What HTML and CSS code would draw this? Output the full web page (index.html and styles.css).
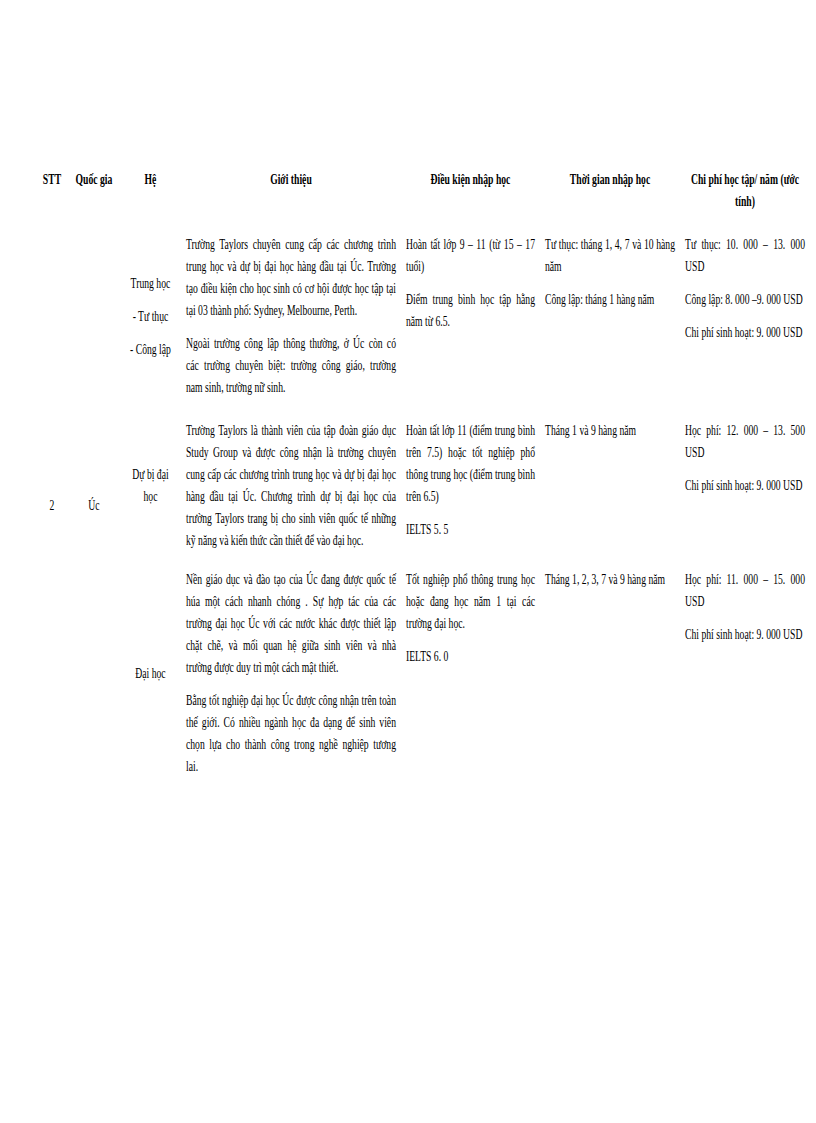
FILE: index.html
```html
<!DOCTYPE html>
<html lang="vi">
<head>
<meta charset="utf-8">
<title>Du học Úc</title>
<link rel="stylesheet" href="styles.css">
</head>
<body>
<div class="page">
<div class="sheet">
<table class="grid">
<colgroup>
<col class="c1"><col class="c2"><col class="c3"><col class="c4"><col class="c5"><col class="c6"><col class="c7">
</colgroup>
<thead>
<tr>
<th><p>STT</p></th>
<th><p>Quốc gia</p></th>
<th><p>Hệ</p></th>
<th><p>Giới thiệu</p></th>
<th><p>Điều kiện nhập học</p></th>
<th><p>Thời gian nhập học</p></th>
<th><p>Chi phí học tập/ năm (ước tính)</p></th>
</tr>
</thead>
<tbody>
<tr>
<td class="mid" rowspan="3"><p>2</p></td>
<td class="mid" rowspan="3"><p>Úc</p></td>
<td class="mid"><p>Trung học</p><p>- Tư thục</p><p>- Công lập</p></td>
<td>
<p><span class="l">Trường Taylors chuyên cung cấp các chương trình</span><span class="l">trung học và dự bị đại học hàng đầu tại Úc. Trường</span><span class="l">tạo điều kiện cho học sinh có cơ hội được học tập tại</span><span class="e">tại 03 thành phố: Sydney, Melbourne, Perth.</span></p>
<p><span class="l">Ngoài trường công lập thông thường, ở Úc còn có</span><span class="l">các trường chuyên biệt: trường công giáo, trường</span><span class="e">nam sinh, trường nữ sinh.</span></p>
</td>
<td>
<p><span class="l">Hoàn tất lớp 9 – 11 (từ 15 – 17</span><span class="e">tuổi)</span></p>
<p><span class="l">Điểm trung bình học tập hằng</span><span class="e">năm từ 6.5.</span></p>
</td>
<td>
<p><span class="l">Tư thục: tháng 1, 4, 7 và 10 hàng</span><span class="e">năm</span></p>
<p><span class="e">Công lập: tháng 1 hàng năm</span></p>
</td>
<td>
<p><span class="l">Tư thục: 10. 000 – 13. 000</span><span class="e">USD</span></p>
<p><span class="e">Công lập: 8. 000 –9. 000 USD</span></p>
<p><span class="e">Chi phí sinh hoạt: 9. 000 USD</span></p>
</td>
</tr>
<tr class="tight">
<td class="mid"><p>Dự bị đại<br>học</p></td>
<td>
<p><span class="l">Trường Taylors là thành viên của tập đoàn giáo dục</span><span class="l">Study Group và được công nhận là trường chuyên</span><span class="l">cung cấp các chương trình trung học và dự bị đại học</span><span class="l">hàng đầu tại Úc. Chương trình dự bị đại học của</span><span class="l">trường Taylors trang bị cho sinh viên quốc tế những</span><span class="e">kỹ năng và kiến thức cần thiết để vào đại học.</span></p>
</td>
<td>
<p><span class="l">Hoàn tất lớp 11 (điểm trung bình</span><span class="l">trên 7.5) hoặc tốt nghiệp phổ</span><span class="l">thông trung học (điểm trung bình</span><span class="e">trên 6.5)</span></p>
<p><span class="e">IELTS 5. 5</span></p>
</td>
<td>
<p><span class="e">Tháng 1 và 9 hàng năm</span></p>
</td>
<td>
<p><span class="l">Học phí: 12. 000 – 13. 500</span><span class="e">USD</span></p>
<p><span class="e">Chi phí sinh hoạt: 9. 000 USD</span></p>
</td>
</tr>
<tr>
<td class="mid"><p>Đại học</p></td>
<td>
<p><span class="l">Nền giáo dục và đào tạo của Úc đang được quốc tế</span><span class="l">húa một cách nhanh chóng . Sự hợp tác của các</span><span class="l">trường đại học Úc với các nước khác được thiết lập</span><span class="l">chặt chẽ, và mối quan hệ giữa sinh viên và nhà</span><span class="e">trường được duy trì một cách mật thiết.</span></p>
<p><span class="l">Bằng tốt nghiệp đại học Úc được công nhận trên toàn</span><span class="l">thế giới. Có nhiều ngành học đa dạng để sinh viên</span><span class="l">chọn lựa cho thành công trong nghề nghiệp tương</span><span class="e">lai.</span></p>
</td>
<td>
<p><span class="l">Tốt nghiệp phổ thông trung học</span><span class="l">hoặc đang học năm 1 tại các</span><span class="e">trường đại học.</span></p>
<p><span class="e">IELTS 6. 0</span></p>
</td>
<td>
<p><span class="e">Tháng 1, 2, 3, 7 và 9 hàng năm</span></p>
</td>
<td>
<p><span class="l">Học phí: 11. 000 – 15. 000</span><span class="e">USD</span></p>
<p><span class="e">Chi phí sinh hoạt: 9. 000 USD</span></p>
</td>
</tr>
</tbody>
</table>
</div>
</div>
</body>
</html>
```
FILE: styles.css
```css
html, body {
  margin: 0;
  padding: 0;
  background: #ffffff;
}

body {
  font-family: "Liberation Serif", "Times New Roman", serif;
  font-size: 15px;
  line-height: 22px;
  color: #000000;
}

.page {
  padding: 163px 0 0 36px;
}

.sheet {
  width: 1200px;
  transform: scaleX(0.645);
  transform-origin: 0 0;
}

.grid {
  width: 1200px;
  border-collapse: collapse;
  table-layout: fixed;
}

.c1 { width: 49.6px; }
.c2 { width: 80.6px; }
.c3 { width: 94.6px; }
.c4 { width: 341.1px; }
.c5 { width: 215.5px; }
.c6 { width: 217.1px; }
.c7 { width: 201.5px; }

.grid th,
.grid td {
  padding: 5px 7.75px;
  vertical-align: top;
  text-align: left;
}

.grid th {
  font-weight: bold;
  text-align: center;
}

.grid p {
  margin: 0 0 11px 0;
}

.grid .tight td {
  padding-bottom: 1px;
}

.grid td.mid {
  vertical-align: middle;
  text-align: center;
}

.l {
  display: block;
  white-space: nowrap;
  text-align: justify;
  text-align-last: justify;
}

.e {
  display: block;
  white-space: nowrap;
  text-align: left;
}
```
